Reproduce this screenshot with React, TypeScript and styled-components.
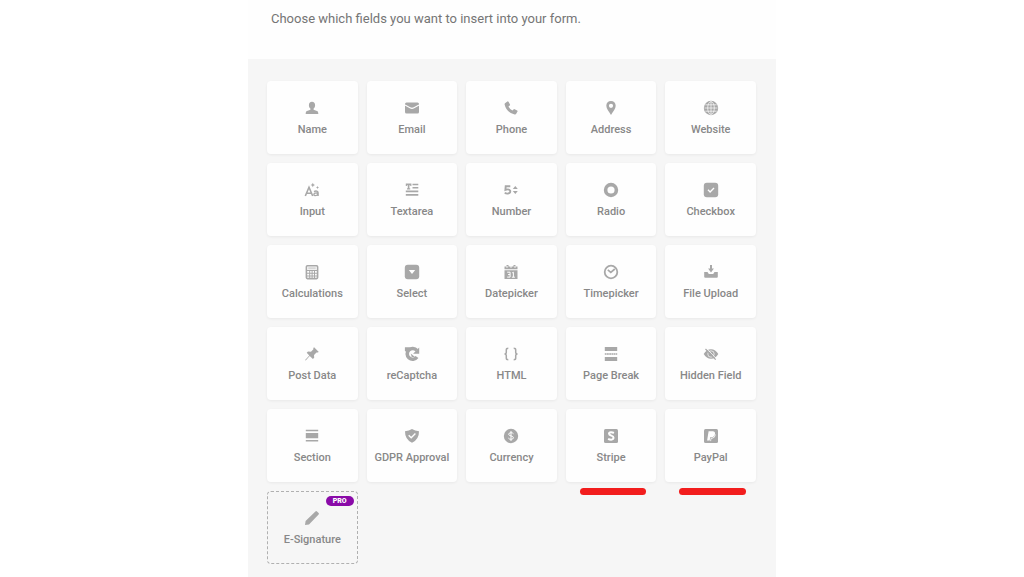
import React from "react";
import styled, { createGlobalStyle } from "styled-components";

const GlobalStyle = createGlobalStyle`
  * { box-sizing: border-box; }
  body {
    margin: 0;
    background: #ffffff;
    font-family: Roboto, "Liberation Sans", sans-serif;
  }
`;

const Dialog = styled.main`
  display: flex;
  flex-direction: column;
  width: 100%;
  max-width: 528px;
  min-height: 100vh;
  margin: 0 auto;
  background: #f6f6f6;
`;

const Header = styled.header`
  padding: 9px 23px 30px;
  background: #fefefe;
`;

const Intro = styled.p`
  margin: 0;
  font-size: 13px;
  line-height: 20px;
  color: #757575;
`;

const FieldGrid = styled.ul`
  display: grid;
  grid-template-columns: repeat(5, minmax(0, 1fr));
  gap: 9px;
  margin: 0;
  padding: 22px 20px 13px 19px;
  list-style: none;
`;

const FieldItem = styled.li`
  position: relative;
  display: flex;
`;

const FieldButton = styled.button<{ $locked?: boolean }>`
  display: flex;
  flex: 1;
  flex-direction: column;
  align-items: center;
  justify-content: center;
  gap: 7px;
  min-width: 0;
  min-height: 73px;
  padding: 1px 0 0;
  border: ${(p) => (p.$locked ? "1px dashed #b0b0b0" : "0")};
  border-radius: 4px;
  background: ${(p) => (p.$locked ? "transparent" : "#fefefe")};
  box-shadow: ${(p) => (p.$locked ? "none" : "0 1px 3px rgba(0, 0, 0, 0.06)")};
  color: #888888;
  font-family: inherit;
  font-size: 11px;
  font-weight: 500;
  line-height: 14px;
  white-space: nowrap;
  cursor: pointer;
`;

const Icon = styled.svg`
  width: 16px;
  height: 16px;
  color: #a8a8a8;
`;

const ProBadge = styled.span`
  position: absolute;
  top: 5px;
  right: 4px;
  padding: 0 7px;
  border-radius: 5px;
  background: #8a0aa8;
  color: #ffffff;
  font-size: 7px;
  font-weight: 900;
  line-height: 10px;
`;

const Marker = styled.span`
  position: absolute;
  right: 10px;
  bottom: -13px;
  left: 14px;
  height: 7px;
  border-radius: 4px;
  background: #f21d1d;
`;

type Field = {
  label: string;
  icon: React.ReactNode;
  marked?: boolean;
  pro?: boolean;
};

const line = { fill: "none", stroke: "currentColor" };
const cut = { fill: "none", stroke: "#fefefe" };

const fields: Field[] = [
  {
    label: "Name",
    icon: <path d="M8 1.800c2 0 3.100 1.400 3.100 3.400 0 1.500-.6 2.700-1.500 3.400v1.200l3.400 1.300c.9.4 1.300 1 1.300 2.900H1.700c0-1.900.4-2.500 1.300-2.900l3.400-1.300V8.600C5.500 7.900 4.900 6.700 4.900 5.200c0-2 1.100-3.400 3.100-3.400z" />,
  },
  {
    label: "Email",
    icon: (
      <>
        <rect x="1" y="2.400" width="14" height="11.200" rx="1.500" />
        <path d="M1 5l5 2.800q2 1.100 4 0L15 5" {...cut} strokeWidth="1.100" />
      </>
    ),
  },
  {
    label: "Phone",
    icon: <path d="M2 3.300L4.400 1.500q.7-.4 1.100.3L7 4.500q.3.700-.3 1.100l-1.200 1q1.300 2.700 3.900 4l1.100-1.200q.5-.5 1.100-.2l2.500 1.300q.7.400.4 1.100l-1.300 2.200q-.5.800-1.500.6Q3.500 12.500 1.600 4.400 1.500 3.700 2 3.300z" />,
  },
  {
    label: "Address",
    icon: <path fillRule="evenodd" d="M8 1c2.700 0 4.700 2 4.700 4.700C12.700 8.700 10 11.500 8 15 6 11.500 3.300 8.700 3.300 5.700 3.300 3 5.300 1 8 1zm0 2.700a2.100 2.100 0 1 0 0 4.200 2.100 2.100 0 0 0 0-4.200z" />,
  },
  {
    label: "Website",
    icon: (
      <>
        <circle cx="8" cy="8" r="7.200" />
        <g {...cut} strokeWidth="0.700">
          <ellipse cx="8" cy="8" rx="3.300" ry="6.400" />
          <path d="M8 1.500v13M1.500 8h13M2.300 4.800h11.400M2.300 11.200h11.400" />
        </g>
      </>
    ),
  },
  {
    label: "Input",
    icon: (
      <>
        <path d="M1.300 14L5 5.200 8.700 14M2.700 11.200h4.600" {...line} strokeWidth="1.600" />
        <path d="M10 9.600q2-1.200 3.500-.1.600.5.600 1.500v3M14 11q-4-.3-4.100 1.400 0 1.200 1.400 1.200 1.900 0 2.700-1.600" {...line} strokeWidth="1.400" />
        <path d="M8.800.8l.7 1.500 1.500.7-1.500.7-.7 1.500-.7-1.500L6.600 3l1.500-.7zM13.500 4l.5 1 1 .5-1 .5-.5 1-.5-1-1-.5 1-.5z" />
      </>
    ),
  },
  {
    label: "Textarea",
    icon: <path d="M1.800 1.500h5.600v2.400H6.300v-.7h-.9v3h.8v1.200H3V6.200h.8v-3h-.9v.7H1.800zM8.500 1.700h5.800v1.500H8.500zM8.500 4.900h5.800v1.500H8.500zM1.800 8.500h12.500v1.800H1.800zM1.800 12h12.500v1.800H1.800z" />,
  },
  {
    label: "Number",
    icon: (
      <>
        <path d="M7.300 4.300H2.700l-.3 3.500q3.800-1.200 4.700.8.700 2.700-2.300 3-2 .1-3-.9" {...line} strokeWidth="1.900" />
        <path d="M9.800 7.100L12.300 4l2.500 3.100zM9.800 9h5l-2.500 3.100z" />
      </>
    ),
  },
  {
    label: "Radio",
    icon: <circle cx="8" cy="8" r="5.400" {...line} strokeWidth="3.600" />,
  },
  {
    label: "Checkbox",
    icon: (
      <>
        <rect x="0.800" y="0.800" width="14.400" height="14.400" rx="3" />
        <path d="M5 7.800l2.100 2.100L11 6" {...cut} strokeWidth="1.400" />
      </>
    ),
  },
  {
    label: "Calculations",
    icon: (
      <>
        <rect x="2.400" y="1.700" width="11.200" height="12.900" rx="1" {...line} strokeWidth="1.600" />
        <path d="M4.200 3.200h7.600v2.200H4.200z" opacity="0.450" />
        <path d="M3 6h10v1H3zM3 8.700h10v1H3zM3 11.400h10v1H3zM5.200 6h1v8h-1zM7.600 6h1v8h-1zM10 6h1v8h-1z" />
      </>
    ),
  },
  {
    label: "Select",
    icon: (
      <>
        <rect x="0.800" y="0.800" width="14.400" height="14.400" rx="3" />
        <path d="M4.800 6h6.400L8 10z" fill="#fefefe" />
      </>
    ),
  },
  {
    label: "Datepicker",
    icon: (
      <>
        <path d="M1.500 2.400h2V1h2v1.400h5V1h2v1.400h2v2.800h-13zM1.500 6.200h13v8.900h-13z" />
        <path d="M4 2v1.800M8 2v1.800M12 2v1.800M4.200 8.200h2.900v4.900H4.200M5 10.600h2M9.200 8.900l1.200-.7v5M8.900 13.200h3" {...cut} strokeWidth="1" />
      </>
    ),
  },
  {
    label: "Timepicker",
    icon: (
      <>
        <circle cx="8" cy="8" r="6.300" {...line} strokeWidth="1.800" />
        <path d="M4.800 5.900l3 2.400 4-3.300" {...line} strokeWidth="1.700" />
      </>
    ),
  },
  {
    label: "File Upload",
    icon: <path d="M7 1h2v3.600h1.900L8 8.400 5.100 4.600H7zM1.200 8h3.300l1.300 2.100h4.400L11.500 8h3.300v4.800q0 1-1 1H2.200q-1 0-1-1z" />,
  },
  {
    label: "Post Data",
    icon: <path d="M10.100 1.300l4.700 4.600-1.200.7-1.100-.2-2.500 2.600.2 2.800-1.300 1.300-3.200-3.200-4 4.600-.6-.5L5.300 9.500 2.700 6.700 4 5.500l3 .2 2.400-2.500-.1-1.100z" />,
  },
  {
    label: "reCaptcha",
    icon: (
      <>
        <path d="M12.800 4.400A5.400 5.400 0 1 0 13 11" {...line} strokeWidth="3.600" />
        <path d="M15.200 1.500v6.300H9.100zM.9 1.300h5L3.400 6.500.9 5z" />
        <path d="M6.700 7.400l4.300 3.500-3.300.2z" />
      </>
    ),
  },
  {
    label: "HTML",
    icon: <path d="M5.300 2.200q-2 0-2 1.500v2.500Q3.300 8 1.500 8q1.800 0 1.800 1.800v2.500q0 1.500 2 1.500M10.700 2.200q2 0 2 1.500v2.500q0 1.800 1.800 1.800-1.800 0-1.800 1.800v2.500q0 1.500-2 1.500" {...line} strokeWidth="1.500" />,
  },
  {
    label: "Page Break",
    icon: (
      <>
        <path d="M1.800 1h12.400v4H1.800zM1.800 11h12.400v4H1.800z" />
        <path d="M1.800 8h12.400" {...line} strokeWidth="1.500" strokeDasharray="1.800 .4" />
      </>
    ),
  },
  {
    label: "Hidden Field",
    icon: (
      <>
        <path d="M.7 8Q3.500 3.200 8 3.200T15.300 8Q12.500 12.800 8 12.800T.7 8z" />
        <circle cx="8" cy="8" r="3.200" {...cut} strokeWidth="0.700" />
        <path d="M3.400 2.200l10 10.500" {...cut} strokeWidth="0.800" />
        <path d="M2.500 3l10.200 10.600" {...line} strokeWidth="1.200" />
      </>
    ),
  },
  {
    label: "Section",
    icon: <path d="M1.800 1.700h12.400v1.500H1.800zM1.800 4.900h12.400v5.300H1.800zM1.800 12h12.400v1.500H1.800z" />,
  },
  {
    label: "GDPR Approval",
    icon: (
      <>
        <path d="M8 1q3 2 7 2.200.2 8-7 11.600Q.8 11.200 1 3.200 5 3 8 1z" />
        <path d="M4.700 7.200l2.500 2.500 4.200-4.200" {...cut} strokeWidth="1.400" />
      </>
    ),
  },
  {
    label: "Currency",
    icon: (
      <>
        <circle cx="8" cy="8" r="7.200" />
        <path d="M10.500 5.800Q9.700 4.700 8 4.700 5.700 4.800 5.700 6.300 5.800 7.500 8 7.900q2.400.4 2.400 1.900-.1 1.500-2.400 1.500-1.800 0-2.600-1.200M8 3v10" {...cut} strokeWidth="1" />
      </>
    ),
  },
  {
    label: "Stripe",
    marked: true,
    icon: (
      <>
        <rect x="1" y="1" width="14" height="14" rx="1.500" />
        <path d="M10.900 5Q9.400 4.200 7.900 4.300 6 4.400 6 5.700q.1 1.200 2.300 1.900 2.300.8 2.200 2.200-.1 1.800-2.300 1.900-1.600 0-3.100-.9" {...cut} strokeWidth="2" />
      </>
    ),
  },
  {
    label: "PayPal",
    marked: true,
    icon: (
      <>
        <rect x="1" y="1" width="14" height="14" rx="1.500" />
        <path d="M5.600 3.300h4.200q2.500.2 2.200 2.700-.5 3-3.500 3.200H7.200l-.5 3.400H4.100z" fill="#fefefe" />
        <path d="M12.400 6.500Q12 10 9 10.300H8l-.4 2.800" {...cut} strokeWidth="0.800" />
      </>
    ),
  },
  {
    label: "E-Signature",
    pro: true,
    icon: <path d="M1 15l.6-4 9.800-9.600q.8-.8 1.600 0l1.600 1.600q.8.800 0 1.600L5 14.400z" />,
  },
];

export default function App() {
  return (
    <>
      <GlobalStyle />
      <Dialog>
        <Header>
          <Intro>Choose which fields you want to insert into your form.</Intro>
        </Header>
        <FieldGrid>
          {fields.map(({ label, icon, marked, pro }) => (
            <FieldItem key={label}>
              <FieldButton type="button" $locked={pro}>
                <Icon viewBox="0 0 16 16" fill="currentColor" aria-hidden="true">
                  {icon}
                </Icon>
                {label}
              </FieldButton>
              {pro && <ProBadge>PRO</ProBadge>}
              {marked && <Marker />}
            </FieldItem>
          ))}
        </FieldGrid>
      </Dialog>
    </>
  );
}
